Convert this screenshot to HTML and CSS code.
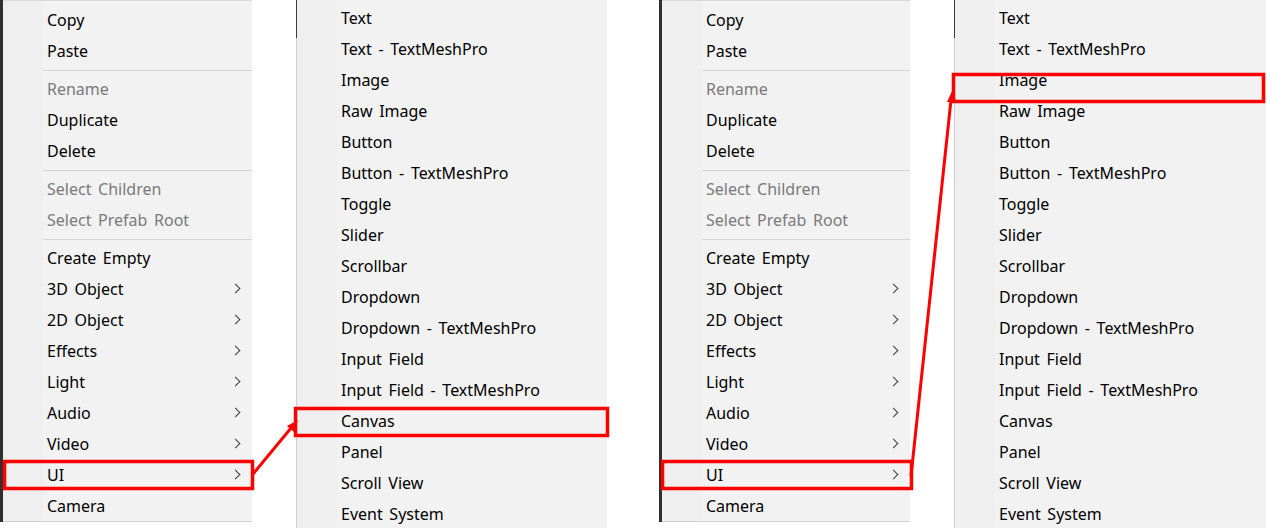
FILE: index.html
```html
<!DOCTYPE html>
<html>
<head>
<meta charset="utf-8">
<link rel="stylesheet" href="styles.css">
</head>
<body>
<div class="stage">
  <div class="shot shot-a">
    <div class="edge"></div>
    <div class="menu main">
      <div class="item">Copy</div>
      <div class="item">Paste</div>
      <div class="sep"></div>
      <div class="item dis">Rename</div>
      <div class="item">Duplicate</div>
      <div class="item">Delete</div>
      <div class="sep"></div>
      <div class="item dis">Select Children</div>
      <div class="item dis">Select Prefab Root</div>
      <div class="sep"></div>
      <div class="item">Create Empty</div>
      <div class="item sub">3D Object</div>
      <div class="item sub">2D Object</div>
      <div class="item sub">Effects</div>
      <div class="item sub">Light</div>
      <div class="item sub">Audio</div>
      <div class="item sub">Video</div>
      <div class="item sub">UI</div>
      <div class="item">Camera</div>
    </div>
    <div class="gap"></div>
    <div class="vline"><div class="vdark"></div></div>
    <div class="menu submenu">
      <div class="item">Text</div>
      <div class="item">Text - TextMeshPro</div>
      <div class="item">Image</div>
      <div class="item">Raw Image</div>
      <div class="item">Button</div>
      <div class="item">Button - TextMeshPro</div>
      <div class="item">Toggle</div>
      <div class="item">Slider</div>
      <div class="item">Scrollbar</div>
      <div class="item">Dropdown</div>
      <div class="item">Dropdown - TextMeshPro</div>
      <div class="item">Input Field</div>
      <div class="item">Input Field - TextMeshPro</div>
      <div class="item">Canvas</div>
      <div class="item">Panel</div>
      <div class="item">Scroll View</div>
      <div class="item">Event System</div>
    </div>
  </div>
  <div class="spacer"></div>
  <div class="shot shot-b">
    <div class="edge"></div>
    <div class="menu main mainb">
      <div class="item">Copy</div>
      <div class="item">Paste</div>
      <div class="sep"></div>
      <div class="item dis">Rename</div>
      <div class="item">Duplicate</div>
      <div class="item">Delete</div>
      <div class="sep"></div>
      <div class="item dis">Select Children</div>
      <div class="item dis">Select Prefab Root</div>
      <div class="sep"></div>
      <div class="item">Create Empty</div>
      <div class="item sub">3D Object</div>
      <div class="item sub">2D Object</div>
      <div class="item sub">Effects</div>
      <div class="item sub">Light</div>
      <div class="item sub">Audio</div>
      <div class="item sub">Video</div>
      <div class="item sub">UI</div>
      <div class="item">Camera</div>
    </div>
    <div class="gap"></div>
    <div class="vline"><div class="vdark"></div></div>
    <div class="menu submenu subb">
      <div class="item">Text</div>
      <div class="item">Text - TextMeshPro</div>
      <div class="item">Image</div>
      <div class="item">Raw Image</div>
      <div class="item">Button</div>
      <div class="item">Button - TextMeshPro</div>
      <div class="item">Toggle</div>
      <div class="item">Slider</div>
      <div class="item">Scrollbar</div>
      <div class="item">Dropdown</div>
      <div class="item">Dropdown - TextMeshPro</div>
      <div class="item">Input Field</div>
      <div class="item">Input Field - TextMeshPro</div>
      <div class="item">Canvas</div>
      <div class="item">Panel</div>
      <div class="item">Scroll View</div>
      <div class="item">Event System</div>
    </div>
  </div>
  <svg class="marks" width="1267" height="528" viewBox="0 0 1267 528">
    <g fill="none" stroke="#ff0000" stroke-width="3.5">
      <rect x="4.5" y="461.5" width="248" height="27"/>
      <rect x="295.5" y="408.5" width="312" height="27"/>
      <rect x="662.5" y="461.5" width="249" height="27"/>
      <rect x="953.5" y="74.5" width="310" height="27"/>
    </g>
    <g fill="none" stroke="#ff0000" stroke-width="3">
      <line x1="253" y1="474" x2="291" y2="428"/>
      <line x1="911" y1="476" x2="951" y2="100"/>
    </g>
    <g fill="#ff0000">
      <polygon points="298,420 287,426 294,432"/>
      <polygon points="953,89 947,102 956,102"/>
    </g>
  </svg>
</div>
</body>
</html>
```

FILE: styles.css
```css
* { box-sizing: border-box; }
html, body { margin: 0; padding: 0; background: #fff; }
body {
  font-family: "Noto Sans", "Noto Sans CJK KR", sans-serif;
  font-size: 16px;
  color: #000;
}
.stage {
  position: relative;
  width: 1267px;
  height: 528px;
  display: flex;
  overflow: hidden;
}
.shot { display: flex; align-items: flex-start; height: 528px; }
.edge { width: 3px; height: 522px; background: #2f2f2f; }
.menu {
  background: linear-gradient(to right, #efefef 0, #efefef 40px, #f2f2f2 40px);
}
.main {
  width: 249px;
  height: 522px;
  padding-top: 4px;
  border-top: 1px solid #d9d9d9;
  border-bottom: 1px solid #cfcfcf;
}
.mainb { width: 248px; }
.submenu {
  width: 310px;
  height: 528px;
  padding-top: 3px;
}
.subb { width: 311px; }
.gap { width: 44px; height: 528px; background: #fff; }
.vline { width: 1px; height: 528px; background: #cfcfcf; }
.vdark { height: 38px; background: #3a3a3a; }
.spacer { width: 52px; height: 528px; background: #fff; }
.item {
  height: 31px;
  line-height: 31px;
  padding-left: 44px;
  position: relative;
  white-space: nowrap;
  word-spacing: 2.5px;
}
.dis { color: #7a7a7a; }
.sep {
  height: 7px;
  margin-left: 40px;
  position: relative;
}
.sep::after {
  content: "";
  position: absolute;
  left: 0; right: 0; top: 3px;
  height: 1px;
  background: #d5d5d5;
}
.sub::after {
  content: "";
  position: absolute;
  right: 13px;
  top: 11px;
  width: 6px;
  height: 6px;
  border-right: 1.5px solid #3c3c3c;
  border-top: 1.5px solid #3c3c3c;
  transform: rotate(45deg);
}
.marks { position: absolute; left: 0; top: 0; pointer-events: none; }
```
